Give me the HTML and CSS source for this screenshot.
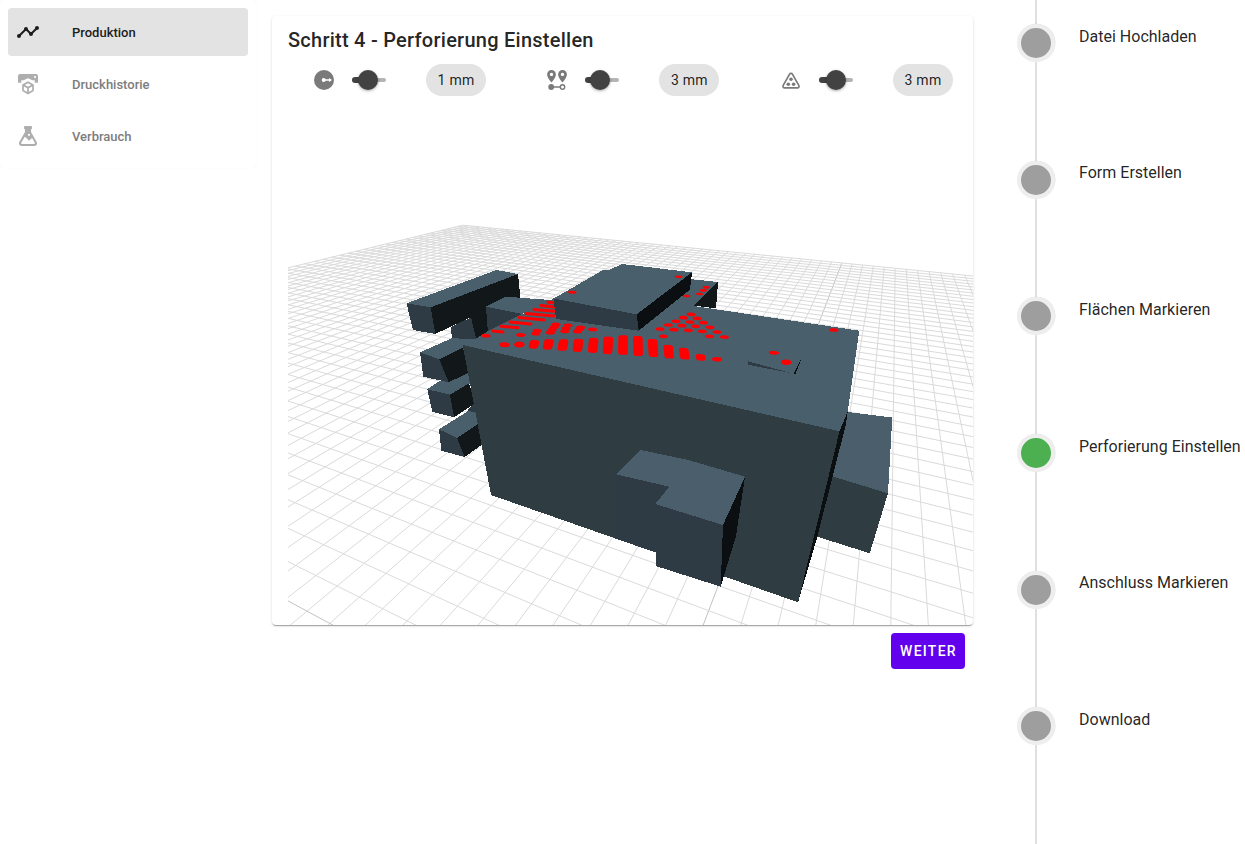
FILE: index.html
```html
<!DOCTYPE html>
<html lang="de">
<head>
<meta charset="utf-8">
<title>Produktion</title>
<link rel="stylesheet" href="styles.css">
</head>
<body>
<div class="app">
  <nav class="sidebar">
    <a class="nav-item active">
      <svg class="icon" viewBox="0 0 24 24"><path d="M23 8c0 1.1-.9 2-2 2-.18 0-.35-.02-.51-.07l-3.56 3.55c.05.16.07.34.07.52 0 1.1-.9 2-2 2s-2-.9-2-2c0-.18.02-.36.07-.52l-2.55-2.55c-.16.05-.34.07-.52.07s-.36-.02-.52-.07l-4.55 4.56c.05.16.07.33.07.51 0 1.1-.9 2-2 2s-2-.9-2-2 .9-2 2-2c.18 0 .35.02.51.07l4.56-4.55C8.02 9.36 8 9.18 8 9c0-1.1.9-2 2-2s2 .9 2 2c0 .18-.02.36-.07.52l2.55 2.55c.16-.05.34-.07.52-.07s.36.02.52.07l3.55-3.56C19.02 8.35 19 8.18 19 8c0-1.1.9-2 2-2s2 .9 2 2z"/></svg>
      <span>Produktion</span>
    </a>
    <a class="nav-item">
      <svg class="icon" viewBox="0 0 24 24"><path fill-rule="evenodd" d="M4 2h16a2 2 0 0 1 2 2v6.800h-3.300V8.300H16.500L12 6.200 7.500 8.300H5.300v2.500H2V4a2 2 0 0 1 2-2zM19 4a1 1 0 1 0 .01 0z"/><path d="M12 10.200l5 2.800v5.600l-5 2.900-5-2.900V13zM7.500 13.300l4.500 2.500 4.500-2.500M12 15.800v5" fill="none" stroke="currentColor" stroke-width="1.700" stroke-linejoin="round"/></svg>
      <span>Druckhistorie</span>
    </a>
    <a class="nav-item">
      <svg class="icon" viewBox="0 0 24 24"><path fill-rule="evenodd" d="M9 2h6a1 1 0 0 1 1 1v1.500l-1 1V8l5.700 10A2.700 2.700 0 0 1 18.300 22H5.700a2.700 2.700 0 0 1-2.400-4L9 8V5.500l-1-1V3a1 1 0 0 1 1-1zM8.800 12.800L5.200 18.800a.8.8 0 0 0 .7 1.200h12.200a.8.8 0 0 0 .7-1.200l-2.700-4.700L13 16.700l-2.600-2.600zM13 9.700a1.100 1.100 0 1 0 .01 0z"/></svg>
      <span>Verbrauch</span>
    </a>
  </nav>

  <main class="content">
    <section class="card">
      <h1 class="title">Schritt 4 - Perforierung Einstellen</h1>
      <div class="controls">
        <div class="control">
          <svg class="tool" viewBox="0 0 24 24"><circle cx="12" cy="12" r="10"/><g class="cut"><circle cx="11.700" cy="12" r="2"/><path d="M12 11.300h5V9.900l3 2.100-3 2.100v-1.400h-5z"/></g></svg>
          <div class="slider"><i class="track"></i><i class="thumb"></i></div>
          <span class="chip">1 mm</span>
        </div>
        <div class="control">
          <svg class="tool" viewBox="0 0 24 24"><path fill-rule="evenodd" d="M6.500 2a4.400 4.400 0 0 1 4.400 4.400c0 3.200-4.400 8-4.400 8s-4.400-4.800-4.400-8A4.400 4.400 0 0 1 6.500 2zm0 2.700a1.700 1.700 0 1 0 .01 0zM17.500 2a4.400 4.400 0 0 1 4.400 4.400c0 3.200-4.400 8-4.400 8s-4.400-4.800-4.400-8A4.400 4.400 0 0 1 17.500 2zm0 2.700a1.700 1.700 0 1 0 .01 0z"/><circle cx="6.200" cy="19" r="2.900"/><path d="M8 18.300h7v1.500H8z"/><circle cx="17.500" cy="19" r="2.200" fill="none" stroke="currentColor" stroke-width="1.400"/></svg>
          <div class="slider"><i class="track"></i><i class="thumb"></i></div>
          <span class="chip">3 mm</span>
        </div>
        <div class="control">
          <svg class="tool" viewBox="0 0 24 24"><path d="M10.600 6.200a1.600 1.600 0 0 1 2.800 0l6.400 11.200a1.600 1.600 0 0 1-1.400 2.500H5.600a1.600 1.600 0 0 1-1.400-2.500z" fill="none" stroke="currentColor" stroke-width="1.700"/><circle cx="12" cy="11.300" r="1.800"/><circle cx="9.300" cy="16.200" r="1.800"/><circle cx="14.600" cy="16.200" r="1.800"/></svg>
          <div class="slider"><i class="track"></i><i class="thumb"></i></div>
          <span class="chip">3 mm</span>
        </div>
      </div>
      <svg class="scene" viewBox="288 97 685 528">
        <g id="grid" class="grid"></g>
        <g class="model">
          <!-- left blocks -->
          <path class="top" d="M406.500 303.300L496.500 270 518 274 430.700 307.300z"/>
          <path class="dark" d="M430.700 307.300L518 274l2.500 25L506 297l-20 10 2 25-12 7-5-21.700L435 334z"/>
          <path class="front" d="M406.500 303.300L430.700 307.300 435.300 334 413 330z"/>
          <path class="front" d="M450.700 327.300L471 317.300l5 21-6 3-18-3z"/>
          <path class="top" d="M506 296.700L486 306.700l35 7.300 36-12v-1.500z"/>
          <path class="front" d="M486 306.700l36 7.300-34 20z"/>
          <path class="top" d="M427.300 389.300L440 380.700l28-10 2 13-20 11z"/>
          <path class="front" d="M427.300 389.300L450 394.700l4 22.600-21.700-5.600z"/>
          <path class="dark" d="M450 394.700l19-11.400 6 20-21 14z"/>
          <path class="front" d="M468 410l5-6 5 0v10l-10-2z"/>
          <path class="top" d="M439 429.300L468.300 411l10 2 1 11-22.300 14z"/>
          <path class="front" d="M439 429.300L457 438l7.700 19-23.400-6.300z"/>
          <path class="dark" d="M457 438l22-14.700 5 20L464.700 457z"/>
          <path class="top" d="M420 352.300L451.700 338.300 476 339l-8 10-28.700 10.300z"/>
          <path class="front" d="M420 352.300l19.300 7 9.400 23-25.400-5.600z"/>
          <path class="dark" d="M439.300 359.300L463 347.500l6 25-20.300 9.800z"/>
          <!-- right block -->
          <path class="side-top" d="M840 411L892.300 417.500 888 493.300 830 476z"/>
          <path class="face" d="M830 475.700L888 493.300 869.700 553.300 812 535z"/>
          <!-- main body -->
          <path class="top" d="M462.700 345L476 338.500 488 331 553 299l50-29 89 9.300 26 2.700-24 24L859.300 330.700 847.700 411.500 839.500 431.500z"/>
          <path class="dark" d="M718 282L716 308.500 694 305.500z"/>
          <path class="face" d="M462.700 345L839.500 431.300 798 602.300 491 495z"/>
          <path class="darkest" d="M839.500 431.300L847.700 411.500 846 424 817 538 798 602.300z"/>
          <path class="front" d="M748 361.300v3.400L792 373.300z"/>
          <path class="darkest" d="M802.700 355.300L793.700 374h1.800z"/>
          <g id="holes-base" class="holes"></g>
          <!-- raised block -->
          <path class="top" d="M622 264L692 272.300 636.700 314.500 553.500 298.500 606 270.300 609 270z"/>
          <path class="front" d="M553.500 298.500L636.700 314.300 638.700 330.700 556 319z"/>
          <path class="darkest" d="M692 272.300L690 289.500 638.700 330.700 636.700 314.300z"/>
          <!-- front block -->
          <path class="front" d="M615.700 474.300L669.300 486.700 723 525 720.700 586.700 655.700 566V552.500L616 538.700z"/>
          <path class="side-top" d="M640.700 450L688.300 460 745 476.700 723 525 655.300 504 669.300 486.700 615.700 474.300z"/>
          <path class="darkest" d="M723 525L745 476.700 736 536 720.700 586.700z"/>
          <g id="holes-raised" class="holes"></g>
        </g>
      </svg>
    </section>
    <div class="actions"><button class="next">WEITER</button></div>
  </main>

  <ol class="stepper">
    <li class="step"><i class="dot"></i><span>Datei Hochladen</span></li>
    <li class="step"><i class="dot"></i><span>Form Erstellen</span></li>
    <li class="step"><i class="dot"></i><span>Flächen Markieren</span></li>
    <li class="step current"><i class="dot"></i><span>Perforierung Einstellen</span></li>
    <li class="step"><i class="dot"></i><span>Anschluss Markieren</span></li>
    <li class="step"><i class="dot"></i><span>Download</span></li>
  </ol>
</div>
<script src="scene.js"></script>
</body>
</html>
```
FILE: styles.css
```css
* { box-sizing: border-box; }
body {
  margin: 0;
  background: #fff;
  color: rgba(0, 0, 0, .87);
  font-family: Roboto, "Liberation Sans", sans-serif;
}
.app {
  display: flex;
  align-items: flex-start;
  width: 1245px;
  height: 844px;
  overflow: hidden;
}
.sidebar {
  flex: none;
  display: flex;
  flex-direction: column;
  gap: 4px;
  width: 256px;
  height: 168px;
  padding: 8px;
  border-radius: 4px;
  box-shadow: 0 0 1px rgba(0, 0, 0, .1);
}
.nav-item {
  display: flex;
  align-items: center;
  gap: 32px;
  height: 48px;
  padding-left: 8px;
  border-radius: 4px;
  color: #aeaeae;
  font-size: 13px;
  font-weight: 500;
  line-height: 20px;
}
.nav-item span { padding-top: 2px; color: #7d7d7d; }
.nav-item.active { background: #e3e3e3; color: #1d1d1d; }
.nav-item.active span { color: #1d1d1d; }
.icon, .tool { flex: none; width: 24px; height: 24px; fill: currentColor; }
.content { flex: none; width: 701px; margin: 16px 0 0 16px; }
.card {
  height: 609px;
  border-radius: 4px;
  overflow: hidden;
  box-shadow: 0 2px 1px -1px rgba(0, 0, 0, .2), 0 1px 1px rgba(0, 0, 0, .14), 0 1px 3px rgba(0, 0, 0, .12);
}
.title {
  height: 48px;
  margin: 0;
  padding: 8px 16px;
  font-size: 20px;
  font-weight: 500;
  line-height: 32px;
  letter-spacing: .25px;
}
.controls { display: grid; grid-template-columns: 233.4px 233.6px 234px; height: 33px; }
.control { display: flex; align-items: center; height: 32px; padding-left: 40px; }
.tool { color: #7a7a7a; }
.cut { fill: #fff; }
.slider { position: relative; width: 34px; height: 20px; margin: 0 40px 0 16px; }
.track {
  display: block;
  height: 4px;
  margin-top: 8px;
  border-radius: 2px;
  background: #b4b4b4;
}
.track::before {
  content: "";
  position: absolute;
  left: 0;
  top: 7px;
  width: 16px;
  height: 6px;
  border-radius: 3px;
  background: #424242;
}
.thumb {
  position: absolute;
  left: 6px;
  top: 0;
  width: 20px;
  height: 20px;
  border-radius: 50%;
  background: #424242;
  box-shadow: 0 1px 3px rgba(0, 0, 0, .35);
}
.control:nth-child(2) .thumb { left: 4.6px; }
.control:nth-child(3) .thumb { left: 7px; }
.chip {
  width: 60px;
  height: 32px;
  border-radius: 16px;
  background: #e3e3e3;
  font-size: 14px;
  line-height: 32px;
  letter-spacing: .25px;
  text-align: center;
}
.scene { display: block; width: 685px; height: 528px; margin-left: 16px; }
.grid { fill: none; stroke: #dadada; stroke-width: 1; }
.grid .axis { stroke: #c2c2c2; }
.model { shape-rendering: crispEdges; }
.top { fill: #4a5f6c; }
.side-top { fill: #4b5e6b; }
.front { fill: #2f3b44; }
.face { fill: #2f3d43; }
.dark { fill: #121719; }
.darkest { fill: #0b0f11; }
.holes { fill: #f00; stroke: #f00; stroke-width: 0; stroke-linecap: round; shape-rendering: auto; }
.holes line { stroke-width: 3; }
.actions { display: flex; justify-content: flex-end; padding: 8px; }
.next {
  width: 74px;
  height: 36px;
  padding: 0 0 0 1px;
  border: 0;
  border-radius: 4px;
  background: #6200ee;
  color: #fff;
  font: 500 14px/36px Roboto, sans-serif;
  letter-spacing: 1.25px;
}
.stepper {
  flex: none;
  width: 228px;
  height: 844px;
  margin: 0 0 0 44px;
  padding: 24px 0 0;
  list-style: none;
  background: linear-gradient(#e0e0e0, #e0e0e0) 18px 0 / 2px 100% no-repeat;
}
.step {
  display: flex;
  gap: 24px;
  height: 136.67px;
  font-size: 16px;
  line-height: 25px;
  white-space: nowrap;
}
.step span { margin-top: -.35px; letter-spacing: .01px; }
.dot {
  flex: none;
  width: 38px;
  height: 38px;
  border: 4px solid #eee;
  border-radius: 50%;
  background: #9e9e9e;
  box-shadow: .5px -.3px 0 rgba(0, 0, 0, .12);
}
.current .dot { background: #4caf50; }
```
FILE: scene.js
```js
const NS = 'http://www.w3.org/2000/svg';
function add(parent, tag, attrs) {
  const el = document.createElementNS(NS, tag);
  for (const k in attrs) el.setAttribute(k, attrs[k]);
  parent.appendChild(el);
}

// Floor grid: both line families converge on the horizon at y = 119.
const grid = document.getElementById('grid');
const H = 119, RX = 897, LX = -603;
for (let b = 0; b <= 63; b++) {
  const k = (-40.6 + 7.86 * (b - 50)) / 106;
  const top = H + 0.0996 * (RX - LX) / (1 - 0.0996 * k);
  add(grid, 'line', { x1: RX + k * (top - H), y1: top, x2: RX + k * 520, y2: H + 520, class: b === 50 ? 'axis' : '' });
}
const edge = (-40.6 - 7.86 * 50) / 106;
for (let a = 0; a <= 52; a++) {
  const m = 106 / (1064 - 17.36 * a);
  const y = (RX - LX) * m / (1 - m * edge);
  add(grid, 'line', { x1: RX + edge * y, y1: H + y, x2: 1000, y2: H + (1000 - LX) * m, class: a === 50 ? 'axis' : '' });
}

const base = document.getElementById('holes-base');
const raised = document.getElementById('holes-raised');
const oval = (g, x, y, rx, ry) => add(g, 'ellipse', { cx: x, cy: y, rx, ry, transform: `rotate(3 ${x} ${y})` });

// Long slots in the front row: x, y, height, skew
[[534, 344.3, 8.5, -14], [548.3, 344.3, 10.5, -12], [563, 345, 11.5, -10], [578, 345.3, 13, -7],
 [593.2, 345.3, 15, -5], [608, 345.3, 17.5, -4], [623, 345, 19.5, -1], [638, 346, 20, 1],
 [653, 348, 18, 4], [668.7, 351.7, 13.5, 6], [684.3, 353.7, 11.5, 8], [700.7, 357.3, 6.5, 8]
].forEach(([x, y, h, s]) => add(base, 'rect', {
  x: -4.8, y: -h / 2, width: 9.6, height: h, rx: 3, ry: 2.5, transform: `translate(${x} ${y}) skewX(${s}) skewY(3)`
}));
oval(base, 504.5, 344.7, 5, 2.5);
oval(base, 519.3, 344.5, 5.3, 3);
oval(base, 717, 359.3, 5, 2.3);

// Round holes behind the front row
[[520.7, 335], [537.3, 330.7], [535.7, 333.7], [556, 324.3], [554.3, 327], [552, 330], [550.3, 332.7],
 [568, 325.3], [566, 328.3], [564.7, 331.3], [580.7, 327.3], [579.3, 329.3], [577.3, 331.5], [592.7, 329.4],
 [486, 335.7]].forEach(([x, y]) => oval(base, x, y, 4.6, 1.9));

// Slots along the left edge
[[493, 331, 503, 332], [501, 326.2, 518, 327.8], [510, 322, 531, 324], [519, 317.4, 544, 320],
 [526, 313.5, 554, 316], [534, 309.5, 554, 311.2], [541, 305.5, 554, 307], [548, 302.2, 554, 302.7]
].forEach(([x1, y1, x2, y2]) => add(base, 'line', { x1, y1, x2, y2 }));

// Hole field right of the raised block
[[273, 178], [250, 188], [291, 190], [228, 199], [270, 201], [310, 203], [205, 210], [246, 212], [287, 214],
 [330, 217], [180, 222], [222, 224], [265, 226], [307, 229], [351, 231], [190, 244], [328, 244], [373, 246],
 [319, 97], [310, 106], [299, 117], [260, 123]
].forEach(([x, y]) => oval(base, 600 + x / 3, 255 + y / 3, y < 130 ? 3.7 : 4.5, y < 130 ? 1.3 : 1.8));
oval(base, 833.7, 330, 4.7, 1.8);
oval(base, 774, 352.8, 5, 1.9);
oval(base, 786.3, 362.2, 5.3, 2.8);
oval(raised, 678.7, 276.8, 4, 1.3);
oval(raised, 572.3, 292.2, 4.3, 1.4);
```
